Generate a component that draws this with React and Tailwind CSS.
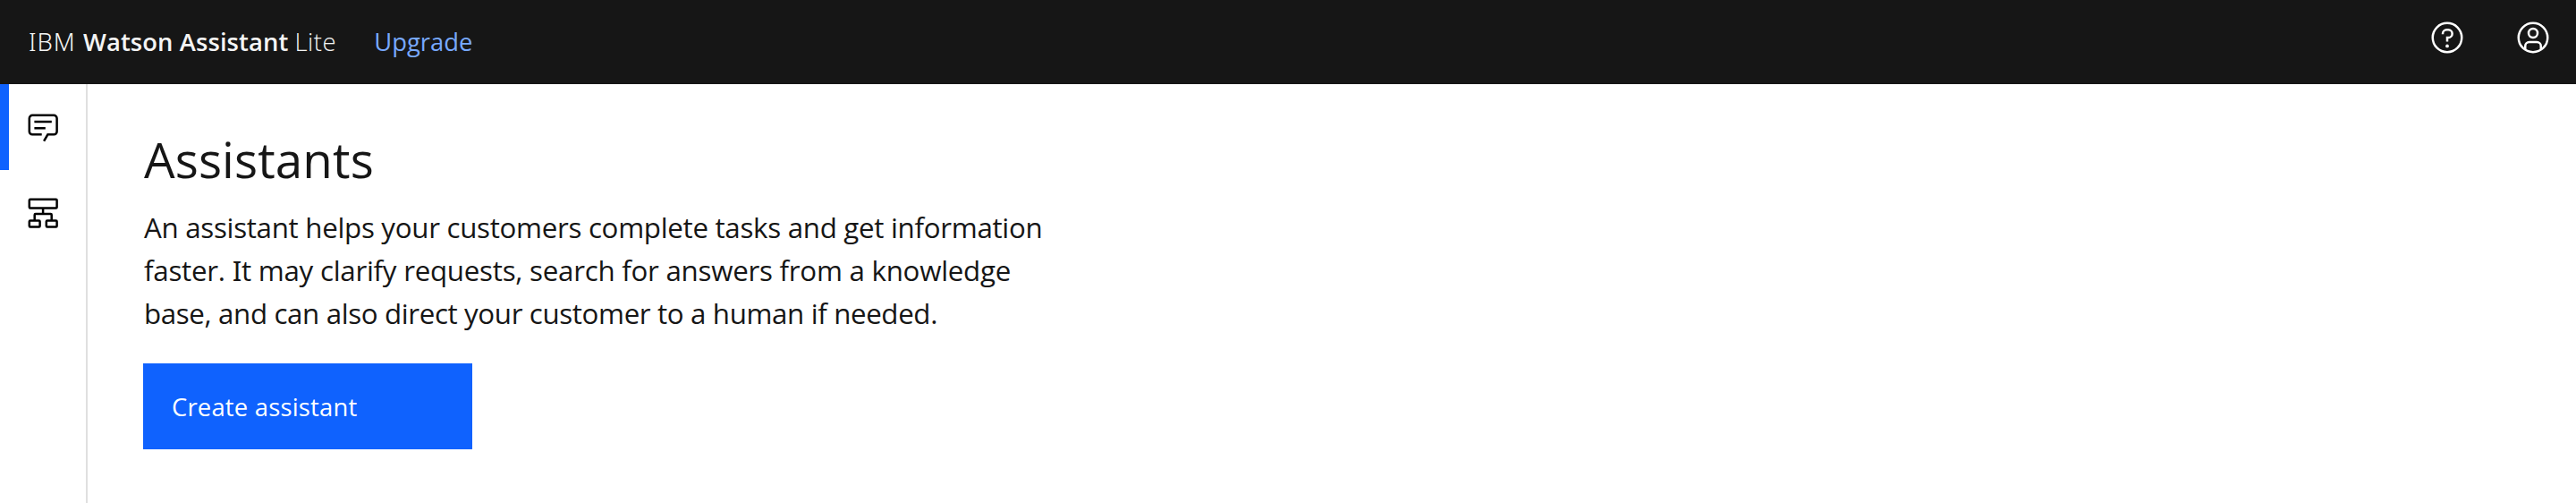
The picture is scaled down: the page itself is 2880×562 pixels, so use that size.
function HelpIcon() {
  return (
    <svg className="size-10" viewBox="0 0 32 32" fill="currentColor">
      <path d="M16,2A14,14,0,1,0,30,16,14,14,0,0,0,16,2Zm0,26A12,12,0,1,1,28,16,12,12,0,0,1,16,28Z" />
      <circle cx="16" cy="23.5" r="1.5" />
      <path d="M17,8H15.5A4.49,4.49,0,0,0,11,12.5V13h2v-.5A2.5,2.5,0,0,1,15.5,10H17a2.5,2.5,0,0,1,0,5H15v4.5h2V17a4.5,4.5,0,0,0,0-9Z" />
    </svg>
  );
}

function UserIcon() {
  return (
    <svg className="size-10" viewBox="0 0 40 40" fill="none" stroke="currentColor" strokeWidth="2.5">
      <circle cx="20" cy="20" r="16.25" />
      <circle cx="20" cy="15" r="5" />
      <path d="M11.25 33.2V29.5a4.5 4.5 0 0 1 4.5-4.5h8.5a4.5 4.5 0 0 1 4.5 4.5v3.7" />
    </svg>
  );
}

function ChatIcon() {
  return (
    <svg className="size-10" viewBox="0 0 40 40" fill="none" stroke="currentColor" strokeWidth="2.5">
      <path d="M18.7 28.3H8.2a3.4 3.4 0 0 1-3.4-3.4V10.2a3.4 3.4 0 0 1 3.4-3.4h24a3.4 3.4 0 0 1 3.4 3.4v14.7a3.4 3.4 0 0 1-3.4 3.4h-6.8l-4.3 7.3" />
      <path d="M10.4 14.1h19.4M10.4 21.2h12.4" />
    </svg>
  );
}

function TreeIcon() {
  return (
    <svg className="size-10" viewBox="0 0 40 40" fill="none" stroke="currentColor" strokeWidth="2.5">
      <rect x="4.8" y="4.8" width="30.8" height="9.6" rx="1" />
      <rect x="4.8" y="28.4" width="11.8" height="7.2" rx="1" />
      <rect x="23.8" y="28.4" width="11.8" height="7.2" rx="1" />
      <path d="M20.1 14.4v6.7M10.7 28.4v-6.3a1 1 0 0 1 1-1h17a1 1 0 0 1 1 1v6.3" />
    </svg>
  );
}

function SerifI() {
  return <span className="font-['Noto_Sans',sans-serif]">I</span>;
}

export default function App() {
  return (
    <div className="flex h-[562px] w-full flex-col bg-white font-['Open_Sans',sans-serif] text-[#161616]">
      <header className="flex h-[94px] shrink-0 items-center bg-[#161616] pl-8 pr-7 text-[27.4px] leading-[36px] text-[#f4f4f4]">
        <div className="flex">
          <span className="font-['Noto_Sans',sans-serif] font-light tracking-[0.9px]">IBM</span>
          <span className="ml-[8.5px] font-semibold tracking-[0.1px]">Watson Assistant</span>
          <span className="ml-[7px] font-light tracking-[0.6px]">Lite</span>
        </div>
        <a className="ml-[42px] text-[#78a9ff]">Upgrade</a>
        <div className="mb-[10px] ml-auto flex gap-14 text-white">
          <HelpIcon />
          <UserIcon />
        </div>
      </header>
      <div className="flex flex-1">
        <nav className="flex w-[98px] shrink-0 flex-col border-r-2 border-[#e0e0e0] text-black">
          <a className="flex h-24 items-center border-l-[10px] border-[#0f62fe] pl-[18px]">
            <ChatIcon />
          </a>
          <a className="flex h-24 items-center pl-7">
            <TreeIcon />
          </a>
        </nav>
        <main className="pl-[62px] pt-[50px]">
          <h1 className="pl-px text-[54.75px] leading-[68px] tracking-[0.1px]">Assistants</h1>
          <p className="mt-[18px] pl-px text-[31.3px] leading-[48px]">
            <span className="tracking-[-0.3px]">An assistant helps your customers complete tasks and get information</span>
            <br />
            <span className="tracking-[-0.26px]">
              faster. <SerifI />t may clarify requests, search for answers from a knowledge
            </span>
            <br />
            <span className="tracking-[-0.37px]">base, and can also direct your customer to a human if needed.</span>
          </p>
          <button className="mt-8 flex h-24 w-[368px] items-center bg-[#0f62fe] pl-8 pt-0.5 text-[27.4px] tracking-[0.2px] text-white">
            Create assistant
          </button>
        </main>
      </div>
    </div>
  );
}
